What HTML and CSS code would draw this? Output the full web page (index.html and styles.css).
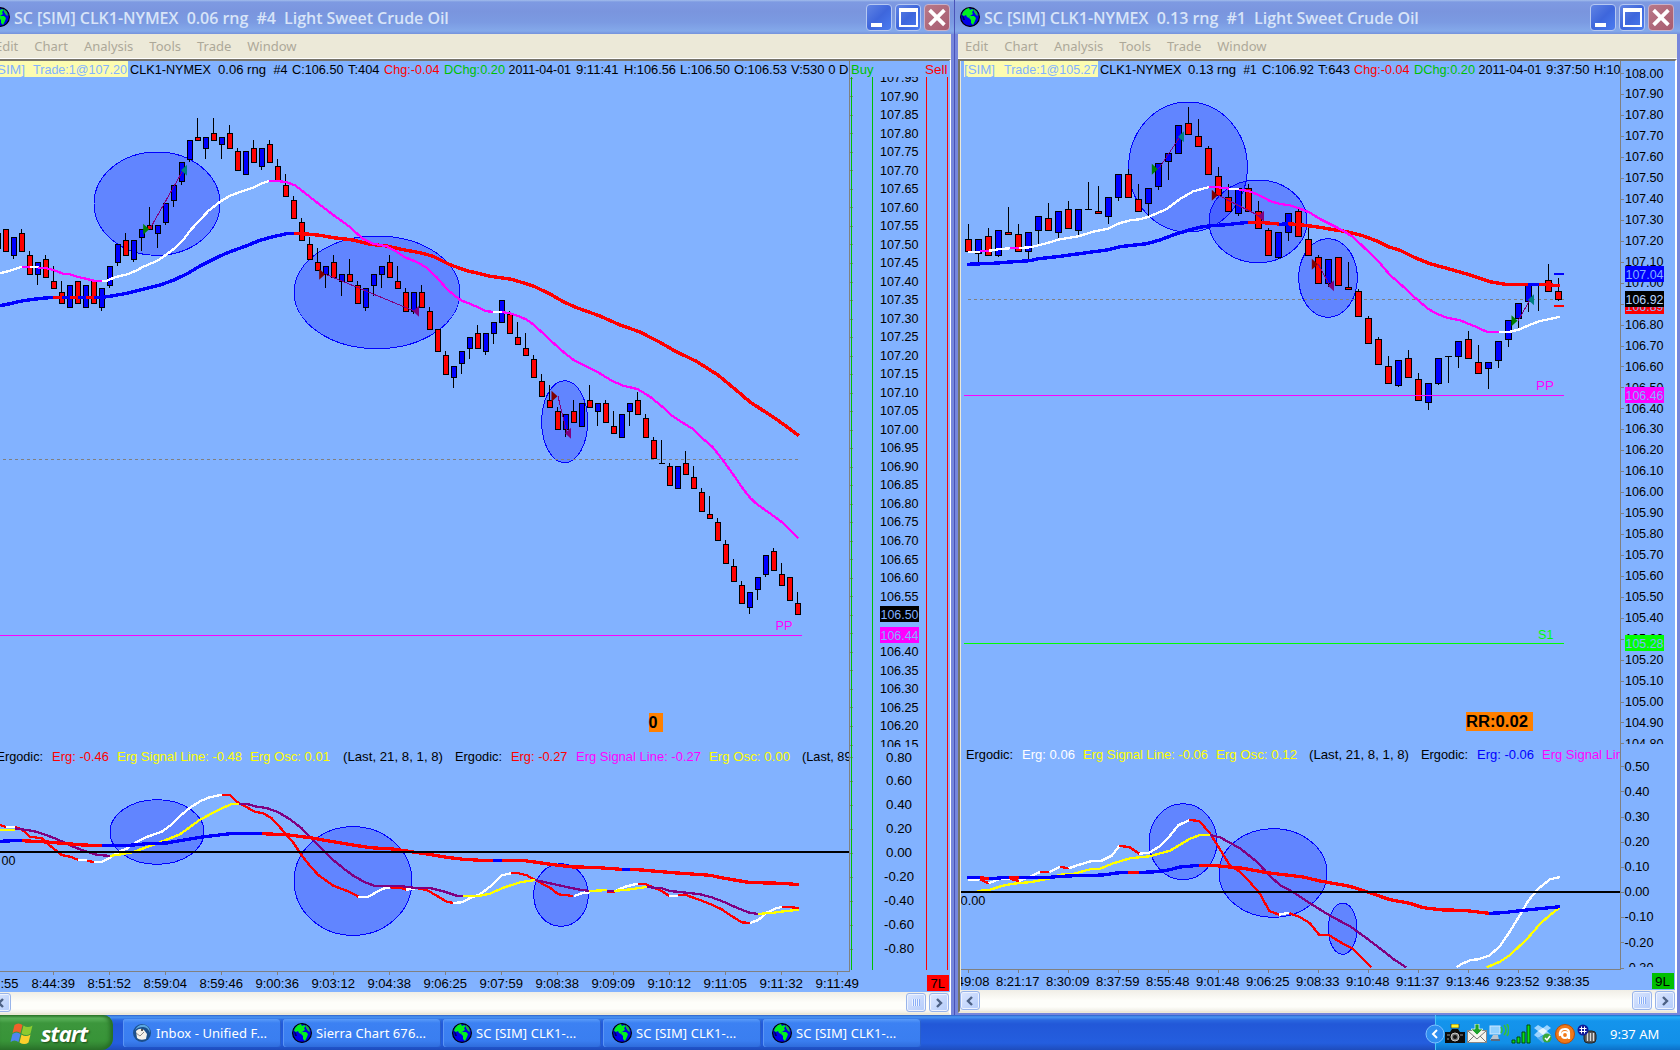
FILE: index.html
```
<!DOCTYPE html>
<html lang="en">
<head>
  <meta charset="UTF-8">
  <meta name="viewport" content="width=device-width, initial-scale=1.0">
  <title>Sierra Chart</title>
  <link rel="stylesheet" href="styles.css">
</head>
<body>
  <!-- Shared icons -->
  <svg class="defs" width="0" height="0">
    <symbol id="globe" viewBox="0 0 20 20">
      <circle cx="10" cy="10" r="9.4" fill="#0000e8" stroke="#000" stroke-width="1.2"/>
      <path d="M3 5l3-3 3-1 1 2 2-1 2 1-2 2 1 2-3 2-1 2-2-1-1-2-2 1-2-1z" fill="#00f020"/>
      <path d="M10 9l4 0 2 2-1 3-2 4-2-2 0-3-2-2z" fill="#00f020"/>
      <path d="M14 2l3 3 1 4-2-1-2-3z" fill="#18b838"/>
      <path d="M2 8l2 2 1 3-2 0z" fill="#000060"/>
    </symbol>
    <symbol id="arrow-left" viewBox="0 0 20 20">
      <path d="M12 6l-4 4 4 4" fill="none" stroke="#4d6185" stroke-width="2.4"/>
    </symbol>
    <symbol id="arrow-right" viewBox="0 0 20 20">
      <path d="M8 6l4 4-4 4" fill="none" stroke="#4d6185" stroke-width="2.4"/>
    </symbol>
    <symbol id="close" viewBox="0 0 26 26">
      <path d="M5 5l16 16M21 5l-16 16" stroke="#fff" stroke-width="4"/>
    </symbol>
  </svg>

  <div class="desktop">
    <div class="windows">
      <!-- 0.06 range chart -->
      <section class="window window-left">
        <header class="title-bar">
          <svg class="globe"><use href="#globe"/></svg>
          <h1 class="title">SC [SIM] CLK1-NYMEX&nbsp; 0.06 rng&nbsp; #4&nbsp; Light Sweet Crude Oil</h1>
          <div class="caption-buttons">
            <span class="caption minimize"></span>
            <span class="caption maximize"></span>
            <span class="caption close"><svg><use href="#close"/></svg></span>
          </div>
        </header>
        <nav class="menu">
          <span>Edit</span><span>Chart</span><span>Analysis</span><span>Tools</span><span>Trade</span><span>Window</span>
        </nav>
        <div class="client">
          <svg class="chart" id="chartLeft" width="950" height="931" viewBox="0 61 950 931"></svg>
          <div class="scrollbar">
            <span class="scroll-button"><svg><use href="#arrow-left"/></svg></span>
            <span class="thumb"><i></i></span>
            <span class="scroll-button"><svg><use href="#arrow-right"/></svg></span>
          </div>
        </div>
      </section>

      <!-- 0.13 range chart -->
      <section class="window window-right">
        <header class="title-bar">
          <svg class="globe"><use href="#globe"/></svg>
          <h1 class="title">SC [SIM] CLK1-NYMEX&nbsp; 0.13 rng&nbsp; #1&nbsp; Light Sweet Crude Oil</h1>
          <div class="caption-buttons">
            <span class="caption minimize"></span>
            <span class="caption maximize"></span>
            <span class="caption close"><svg><use href="#close"/></svg></span>
          </div>
        </header>
        <nav class="menu">
          <span>Edit</span><span>Chart</span><span>Analysis</span><span>Tools</span><span>Trade</span><span>Window</span>
        </nav>
        <div class="client">
          <svg class="chart" id="chartRight" width="714" height="929" viewBox="961 61 714 929"></svg>
          <div class="scrollbar">
            <span class="scroll-button"><svg><use href="#arrow-left"/></svg></span>
            <span class="thumb"><i></i></span>
            <span class="scroll-button"><svg><use href="#arrow-right"/></svg></span>
          </div>
        </div>
      </section>
    </div>

    <footer class="taskbar">
      <div class="start">
        <svg class="flag" viewBox="0 0 24 24">
          <path d="M4 4q4-3 8 0l-2 8q-4-3-8 0z" fill="#f0602a"/>
          <path d="M13 4.500q4 3 9 0l-2 8q-4 3-9 0z" fill="#8ccb30"/>
          <path d="M2 13q4-3 8 0l-2 8q-4-3-8 0z" fill="#4f86f0"/>
          <path d="M11 13.500q4 3 9 0l-2 8q-4 3-9 0z" fill="#fbd02c"/>
        </svg>
        <span>start</span>
      </div>
      <div class="tasks">
        <div class="task">
          <svg viewBox="0 0 20 20">
            <circle cx="10" cy="10" r="9" fill="#1b4f8c"/>
            <path d="M3 7q3-6 10-5q5 2 5 8q-2-6-7-6q-5 0-8 3z" fill="#5aa6e0"/>
            <path d="M4 8q4-4 8-1l3 4-1 5q-6 2-9-1z" fill="#f4f1ea"/>
            <path d="M4 10l4 3 4-4" fill="none" stroke="#8a8a8a"/>
            <circle cx="10" cy="7" r="1" fill="#222"/>
          </svg>
          <span>Inbox - Unified F...</span>
        </div>
        <div class="task"><svg><use href="#globe"/></svg><span>Sierra Chart 676...</span></div>
        <div class="task"><svg><use href="#globe"/></svg><span>SC [SIM] CLK1-...</span></div>
        <div class="task"><svg><use href="#globe"/></svg><span>SC [SIM] CLK1-...</span></div>
        <div class="task"><svg><use href="#globe"/></svg><span>SC [SIM] CLK1-...</span></div>
      </div>
      <div class="tray">
        <svg class="expand" viewBox="0 0 20 20">
          <circle cx="10" cy="10" r="9" fill="#2f8ef0" stroke="#7cc0ff"/>
          <path d="M12 6l-4 4 4 4" fill="none" stroke="#fff" stroke-width="2"/>
        </svg>
        <!-- camera -->
        <svg viewBox="0 0 20 20">
          <rect x="6" y="0" width="8" height="4" fill="#fff22a" stroke="#222" stroke-width=".6"/>
          <path d="M0 8h5l2-3h6l2 3h5v11H0z" fill="#0c0c0c"/>
          <circle cx="10" cy="13" r="4" fill="#777" stroke="#ccc"/>
          <circle cx="10" cy="13" r="2" fill="#111"/>
          <path d="M2 11h3M15 11h3M2 15h2" stroke="#999"/>
        </svg>
        <!-- mail -->
        <svg viewBox="0 0 20 20">
          <rect x=".5" y="6.500" width="19" height="12" fill="#f6f6ee" stroke="#888"/>
          <path d="M1 7l9 8 9-8M1 18l6-6M19 18l-6-6" fill="none" stroke="#777"/>
          <path d="M8 0h4v5h4l-6 6-6-6h4z" fill="#1ea32a" stroke="#fff" stroke-width=".7"/>
        </svg>
        <!-- network -->
        <svg viewBox="0 0 20 20">
          <rect x="1" y="2" width="10" height="8" fill="#8fd0ff" stroke="#cfe8ff"/>
          <path d="M4 11h5l1 5H1z" fill="#b8c4d0"/>
          <path d="M2 16h9" stroke="#5a6a80" stroke-width="2"/>
          <path d="M12 3q2 3 0 6M15 1q4 5 0 10M18 0q4 6 0 12" fill="none" stroke="#35c03a" stroke-width="1.6"/>
        </svg>
        <!-- signal -->
        <svg viewBox="0 0 20 20">
          <path d="M1 16h3v3h-3zM6 13h3v6h-3zM11 8h3v11h-3zM16 1h3v18h-3z" fill="#08e018" stroke="#024a08"/>
        </svg>
        <!-- dropbox -->
        <svg viewBox="0 0 20 20">
          <path d="M1 4l4-3 5 3 4-3 4 3-4 3 4 4-4 3-4-3-5 3-4-3 4-4z" fill="#9bd4ff"/>
          <path d="M5 7l5-3 4 3-4 4z" fill="#e8f6ff"/>
          <path d="M4 14l6-2 5 3-5 4z" fill="#5aaeee"/>
          <circle cx="14" cy="14" r="4.500" fill="#3aa83a"/>
          <path d="M12 14l2 2 3-4" fill="none" stroke="#fff" stroke-width="1.5"/>
        </svg>
        <!-- antivirus -->
        <svg viewBox="0 0 20 20">
          <circle cx="10" cy="10" r="9.500" fill="#f07818" stroke="#b84c08"/>
          <circle cx="10" cy="11" r="3" fill="none" stroke="#fff" stroke-width="2.200"/>
          <path d="M5 12q-1-7 5-7q4 0 4 4v6" fill="none" stroke="#fff" stroke-width="2.200"/>
        </svg>
        <!-- recycler -->
        <svg viewBox="0 0 20 20">
          <rect x="7" y="7" width="12" height="12" rx="4" fill="#555" stroke="#222"/>
          <path d="M10.500 9v8M13.500 9v8M16.500 9v8" stroke="#ddd" stroke-width="1.400"/>
          <circle cx="6" cy="6" r="5.500" fill="#101a9a"/>
          <path d="M2.500 4.500h7M2.500 7.500h7M4.500 2.500v7M7.500 2.500v7" stroke="#fff"/>
        </svg>
        <time class="clock">9:37 AM</time>
      </div>
    </footer>
  </div>

  <script src="charts.js"></script>
</body>
</html>
```
FILE: styles.css
```
*,
*::after {
  margin: 0;
  padding: 0;
  box-sizing: border-box;
}

body {
  width: 1680px;
  height: 1050px;
  overflow: hidden;
  background: #7a8ae0;
  font-family: "Noto Sans", sans-serif;
  font-size: 13px;
}

svg {
  display: block;
  flex: none;
}

.defs {
  position: absolute;
}

.desktop {
  display: flex;
  flex-direction: column;
  height: 1050px;
}

.windows {
  display: flex;
  height: 1015px;
}

/* Windows */
.window {
  display: flex;
  flex-direction: column;
  background: #7686dc;
  overflow: hidden;
}

.window-left {
  width: 955px;
  padding-right: 3px;
  border-right: 1px solid #4a52b8;
}

.window-right {
  width: 725px;
  padding: 0 3px;
}

.title-bar {
  display: flex;
  flex: none;
  align-items: flex-start;
  height: 34px;
  padding-top: 4px;
  background: linear-gradient(#a3bdec 0, #7e9ae2 2px, #7a95de 12px, #7b9ae2 22px, #84a9ea 31px, #7592dc 34px);
}

.window-left .title-bar {
  margin: 0 -3px 0 0;
  padding-right: 4px;
}

.window-right .title-bar {
  margin: 0 -3px;
  padding-left: 5px;
  padding-right: 6px;
}

.globe {
  width: 20px;
  height: 20px;
  margin-top: 3px;
}

.window-left .globe {
  margin-left: -10px;
}

.title {
  flex: 1;
  margin-left: 4px;
  font: 600 16px/29px "Open Sans", sans-serif;
  letter-spacing: -0.04px;
  color: #d8e4f8;
  white-space: nowrap;
}

.caption-buttons {
  display: flex;
  gap: 3px;
}

.caption {
  display: flex;
  width: 26px;
  height: 27px;
  border: 1px solid #b5c8f2;
  border-radius: 4px;
  background: linear-gradient(135deg, #6084e4, #3e66dc 50%, #4a7cf0);
}

.minimize::after {
  content: "";
  align-self: flex-end;
  width: 11px;
  height: 4px;
  margin: 0 0 3px 4px;
  background: #fff;
}

.maximize::after {
  content: "";
  flex: none;
  width: 19px;
  height: 19px;
  margin: 3px;
  border: 2px solid #fff;
  border-top-width: 4px;
}

.caption.close {
  border-color: #c8b0c8;
  background: linear-gradient(135deg, #b87888, #a85c70);
}

.close svg {
  width: 24px;
  height: 25px;
}

.menu {
  display: flex;
  flex: none;
  gap: 16px;
  height: 25px;
  padding-left: 7px;
  background: #ece9d8;
  color: #aca899;
  line-height: 24px;
}

.window-left .menu {
  padding-left: 0;
}

.window-left .menu span:first-child {
  margin-left: -5px;
}

/* Sunken area around the chart */
.client {
  background: #ece9d8;
  border-top: 2px solid #77746a;
  border-right: 2px solid #fff;
  border-bottom: 2px solid #ece9d8;
  box-shadow: 0 -1px #fff;
}

.window-right .client {
  padding-left: 1px;
  border-left: 2px solid #77746a;
}

.chart {
  background: #82b2ff;
  font-family: "Liberation Sans", Arial, sans-serif;
  font-size: 13px;
}

.scrollbar {
  display: flex;
  align-items: center;
  gap: 3px;
  height: 21px;
  background: linear-gradient(#f0eee6, #fefefa 50%, #fefefa 80%, #f0eee6);
}

.window-left .scrollbar {
  margin-left: -9px;
}

.window-right .scrollbar {
  margin-left: -1px;
}

.scroll-button,
.thumb {
  display: flex;
  align-items: center;
  justify-content: center;
  width: 20px;
  height: 19px;
  border: 1px solid #98b4ea;
  border-radius: 3px;
  background: linear-gradient(135deg, #dbe6fe, #b4ccfb);
  box-shadow: inset 0 0 0 1px #eef3ff;
}

.thumb {
  margin-left: auto;
}

.scroll-button svg {
  width: 20px;
  height: 20px;
}

.thumb i {
  width: 8px;
  height: 7px;
  background: repeating-linear-gradient(90deg, #eef4fe 0 1px, #8cb0f8 1px 2px);
}

/* Taskbar */
.taskbar {
  display: flex;
  height: 35px;
  background: linear-gradient(#2c5fc8 0, #4a96f2 2px, #2a68e0 5px, #2258d8 9px, #245edf 28px, #1e4cbc 35px);
}

.start {
  display: flex;
  align-items: center;
  width: 113px;
  padding-left: 10px;
  border-radius: 0 10px 12px 0;
  background: linear-gradient(#2c7a2c, #5cb45c 3px, #3c963c 8px, #389438 26px, #2c742c);
  box-shadow: inset -3px 0 4px #256c25;
  color: #fff;
  font: italic bold 22px/34px "Open Sans", sans-serif;
  letter-spacing: -0.9px;
  text-shadow: 1px 1px 2px #1a4a1a;
}

.flag {
  width: 25px;
  height: 24px;
  margin-right: 6px;
}

.tasks {
  display: flex;
  flex: 1;
  gap: 2px;
  padding: 4px 0 3px 10px;
}

.task {
  display: flex;
  align-items: center;
  gap: 4px;
  width: 158px;
  padding-left: 9px;
  border-radius: 3px;
  background: linear-gradient(#5a9bf8, #3c81f3 4px, #3a7ef0 22px, #2f6cdc);
  box-shadow: inset 1px 0 #5c96f4, inset -1px 0 #2a60cc;
  color: #fff;
  white-space: nowrap;
}

.task svg {
  width: 20px;
  height: 20px;
}

.task span {
  letter-spacing: 0.07px;
}

.tray {
  display: flex;
  align-items: center;
  gap: 2px;
  width: 245px;
  padding-top: 3px;
  border-left: 1px solid #48c8f8;
  background: linear-gradient(#1c6cc8 0, #28b0f8 2px, #1494ec 6px, #1290e8 28px, #0c70c8);
}

.tray svg {
  width: 20px;
  height: 20px;
}

.tray .expand {
  margin-left: -11px;
  margin-right: -2px;
}

.clock {
  margin-left: 11px;
  color: #fff;
}
```
FILE: charts.js
```
const NS = "http://www.w3.org/2000/svg";
const BG = "#82b2ff";

// Coordinates in the data below are in thirds of a pixel
const T = 3;

function el(parent, name, attrs) {
  const node = document.createElementNS(NS, name);
  for (const key in attrs) node.setAttribute(key, attrs[key]);
  parent.appendChild(node);
  return node;
}

function rect(svg, x, y, w, h, fill) {
  return el(svg, "rect", { x, y, width: w, height: h, fill });
}

// Text that runs from x1 to x2
function text(svg, x1, x2, y, str, fill = "#000", extra = {}) {
  const node = el(svg, "text", {
    x: x1, y, fill, textLength: x2 - x1, lengthAdjust: "spacingAndGlyphs", ...extra
  });
  node.textContent = str;
}

function clip(svg, id, x, y, w, h) {
  const c = el(svg, "clipPath", { id });
  el(c, "rect", { x, y, width: w, height: h });
  return el(svg, "g", { "clip-path": `url(#${id})` });
}

// Rows: [color, top, bottom, high, low]
function candles(svg, rows, x0, pitch, width) {
  rows.forEach(([color, top, bottom, high, low], i) => {
    const x = x0 + i * pitch;
    const t = Math.floor(top / T);
    const b = Math.floor(bottom / T);
    const h = high ? Math.floor(high / T) : t;
    const l = low ? Math.floor(low / T) : b;
    const mid = x + Math.floor((width - 1) / 2);
    rect(svg, mid, h, 1, l - h + 1, "#000");
    rect(svg, x, t, width, b - t + 1, "#000");
    if (b > t) rect(svg, x + 1, t + 1, width - 2, b - t - 1, color === "R" ? "#f00" : "#00f");
  });
}

// Segments: [color, "x,y x,y ..."]
function line(svg, segments, width, dx = 0, dy = 0) {
  segments.forEach(([stroke, points]) => {
    const pts = points.split(" ").map(p => {
      const [x, y] = p.split(",").map(Number);
      return `${((x + dx) / T).toFixed(1)},${((y + dy) / T).toFixed(1)}`;
    }).join(" ");
    el(svg, "polyline", {
      points: pts, fill: "none", stroke, "stroke-width": width, "shape-rendering": "crispEdges"
    });
  });
}

function ellipses(svg, rows, dx = 0, dy = 0) {
  rows.forEach(([cx, cy, rx, ry]) => {
    el(svg, "ellipse", {
      cx: (cx + dx) / T, cy: (cy + dy) / T, rx: rx / T, ry: ry / T,
      fill: "#00f", "fill-opacity": 0.25, stroke: "#00f", "shape-rendering": "crispEdges"
    });
  });
}

// Trades: [entry color, entry x, entry y, exit color, exit x, exit y]
function trades(svg, rows, dx = 0) {
  rows.forEach(([c1, x1, y1, c2, x2, y2]) => {
    const a = (x1 + dx) / T, b = y1 / T, c = (x2 + dx) / T, d = y2 / T;
    el(svg, "line", { x1: a, y1: b, x2: c, y2: d, stroke: "purple", "shape-rendering": "crispEdges" });
    el(svg, "path", { d: `M${a - 6.5} ${b - 5.5}v11l6 -5.5z`, fill: c1 });
    el(svg, "path", { d: `M${c + 4} ${d - 5.5}v11l-6 -5.5z`, fill: c2 });
  });
}

function tag(svg, x, y, str, fill, color = BG) {
  rect(svg, x, y, 39, 16, fill);
  text(svg, x + 0.5, x + 38.5, y + 12.7, str, color);
}

function dashed(svg, x1, x2, y) {
  el(svg, "line", { x1, x2, y1: y, y2: y, stroke: "#808080", "stroke-dasharray": "3 3", "shape-rendering": "crispEdges" });
}

/* ---------- 0.06 range chart ---------- */

const leftBars = [
  ["R", 700, 745], ["R", 688, 754], ["B", 712, 766, 0, 775], ["R", 700, 754, 688], ["R", 766, 823, 754],
  ["B", 787, 823, 0, 853], ["R", 778, 832, 766], ["R", 844, 865, 799], ["R", 877, 910, 844], ["B", 856, 922],
  ["R", 844, 910], ["B", 856, 922], ["R", 844, 910], ["B", 865, 922, 0, 932], ["B", 799, 856, 0, 862],
  ["B", 733, 787, 0, 796], ["R", 721, 766, 700], ["B", 721, 778, 0, 784], ["B", 688, 712, 0, 752], ["R", 676, 688, 622],
  ["B", 676, 700, 0, 743], ["B", 610, 667, 0, 674], ["B", 556, 601, 0, 620], ["B", 487, 544, 0, 553], ["B", 421, 478, 0, 484],
  ["R", 412, 421, 355], ["B", 412, 445, 0, 475], ["R", 400, 421, 355], ["B", 412, 433, 0, 475], ["R", 400, 445, 376],
  ["R", 454, 511, 445], ["B", 454, 523], ["R", 445, 487, 421], ["B", 445, 499, 0, 508], ["R", 433, 487, 421],
  ["R", 499, 541, 478], ["R", 556, 589, 523], ["R", 601, 655, 590], ["R", 667, 721, 656], ["R", 733, 778, 712],
  ["R", 787, 811, 745], ["B", 799, 823, 0, 862], ["R", 787, 832, 767], ["B", 823, 844, 0, 886], ["R", 823, 844, 778],
  ["R", 856, 910, 845], ["B", 865, 922, 0, 932], ["B", 823, 856, 0, 886], ["B", 799, 823, 0, 862], ["R", 787, 832, 767],
  ["R", 844, 865, 799], ["R", 877, 934, 866], ["B", 877, 934, 0, 940], ["R", 877, 922, 856], ["R", 934, 988, 922],
  ["R", 988, 1054], ["R", 1066, 1123, 1054], ["B", 1099, 1132, 0, 1163], ["B", 1054, 1090, 0, 1121], ["B", 1012, 1045, 0, 1076],
  ["R", 1000, 1045, 976], ["B", 1000, 1054, 0, 1064], ["B", 967, 1000, 0, 1031], ["B", 901, 967], ["R", 943, 1000, 934],
  ["R", 1012, 1033, 967], ["R", 1045, 1066, 1000], ["R", 1078, 1132, 1066], ["R", 1144, 1189, 1123], ["R", 1201, 1222, 1156],
  ["R", 1234, 1288, 1222], ["B", 1243, 1288, 0, 1310], ["R", 1234, 1267, 1200], ["B", 1210, 1279], ["R", 1201, 1222, 1156],
  ["B", 1210, 1234, 0, 1277], ["R", 1210, 1267, 1200], ["R", 1279, 1300, 1234], ["B", 1243, 1312], ["B", 1210, 1234, 0, 1277],
  ["R", 1201, 1243, 1177], ["R", 1255, 1312, 1243], ["R", 1321, 1376, 1312], ["R", 1390, 1390, 1320], ["R", 1399, 1456, 1390],
  ["B", 1399, 1465], ["R", 1390, 1423, 1354], ["R", 1432, 1465, 1399], ["R", 1477, 1534, 1465], ["R", 1543, 1555, 1488],
  ["R", 1567, 1621, 1555], ["R", 1633, 1690, 1621], ["R", 1699, 1744, 1678], ["R", 1756, 1810, 1744], ["B", 1777, 1822, 0, 1841],
  ["B", 1732, 1768, 0, 1799], ["B", 1666, 1723, 0, 1730], ["R", 1654, 1711, 1644], ["R", 1723, 1756, 1689], ["R", 1732, 1801],
  ["R", 1810, 1843, 1776]
];

const leftFast = [
  ["#fff", "0,820 30,812 66,800"],
  ["#f0f", "66,800 90,800"],
  ["#fff", "90,800 116,801"],
  ["#f0f", "114,803 140,805 160,810 190,821 210,823 234,831 258,836 282,842 306,844"],
  ["#fff", "306,844 320,842 345,832 385,822 410,811 430,800 475,781 500,763 525,744 550,720 570,692 600,660 625,633 660,605 690,587 720,576 760,563 785,550 808,543"],
  ["#f0f", "808,543 830,543 858,546 885,556 910,575 950,607 1000,645 1050,681 1070,700 1090,717 1120,731 1160,739 1190,755 1215,772 1250,786 1280,803 1310,832 1340,866 1365,888 1385,902 1410,911 1440,925 1455,933 1480,936"],
  ["#fff", "1480,936 1506,936"],
  ["#f0f", "1506,936 1530,940 1560,950 1580,959 1602,975 1629,1000 1661,1030 1693,1058 1720,1079 1752,1096 1789,1114 1837,1143 1870,1157 1912,1167 1950,1190 1987,1220 2012,1244 2046,1267 2079,1287 2105,1313 2137,1340 2170,1382 2202,1427 2229,1466 2250,1493 2271,1513 2314,1543 2346,1567 2396,1615"]
];

const leftSlow = [
  ["#00f", "0,917 30,911 65,903 100,898 135,894 162,892"],
  ["#f00", "160,892 186,892"],
  ["#00f", "186,892 210,892"],
  ["#f00", "210,892 234,892"],
  ["#00f", "234,892 258,892"],
  ["#f00", "258,892 282,892"],
  ["#00f", "282,892 306,892 330,889 380,880 430,868 480,855 520,841 560,822 600,798 640,778 680,759 740,737 780,721 820,710 860,701 882,700"],
  ["#f00", "882,700 910,701 960,706 1000,713 1060,720 1110,733 1160,738 1210,749 1260,758 1300,769 1350,794 1400,812 1440,821 1470,829 1535,838 1600,858 1650,882 1690,905 1730,923 1800,948 1860,975 1918,995 1982,1028 2025,1053 2089,1084 2154,1125 2207,1169 2250,1206 2293,1234 2330,1258 2396,1307"]
];

// Oscillator lines start 740px down
const leftErg = [
  ["#f00", "0,255 18,261"],
  ["#fff", "18,261 46,261"],
  ["#f00", "45,261 65,268 90,290 125,295 150,317 185,345 210,350 234,359"],
  ["#fff", "234,359 260,360"],
  ["#f00", "260,362 282,366"],
  ["#fff", "282,366 306,366 330,353 360,334 380,326 410,305 440,291 485,275 510,257 540,228 570,203 600,184 625,173 665,164"],
  ["#f00", "665,164 690,164 716,190 740,202 765,215 790,220 815,235 850,273 880,308 905,346 930,378 955,405 1000,437 1050,456 1075,470"],
  ["#fff", "1075,470 1105,470 1130,456 1150,446 1170,442"],
  ["#f00", "1170,442 1200,443 1218,449"],
  ["#fff", "1218,449 1245,446"],
  ["#f00", "1245,443 1280,450 1310,467 1340,485 1360,489"],
  ["#fff", "1360,489 1385,487 1410,474 1440,463 1475,436 1505,406 1533,400"],
  ["#f00", "1533,399 1553,399 1580,406 1610,422 1650,443 1675,463 1720,468"],
  ["#fff", "1722,468 1750,458 1770,457"],
  ["#f00", "1820,455 1845,456"],
  ["#fff", "1845,453 1875,440 1905,433 1915,433"],
  ["#f00", "1915,432 1935,432 1960,442 1985,453 2008,468"],
  ["#fff", "2008,468 2035,467"],
  ["#f00", "2035,464 2060,466 2100,480 2135,494 2165,508 2190,525 2225,547 2250,549"],
  ["#fff", "2250,549 2275,540 2300,518 2325,506 2345,501"],
  ["#f00", "2345,501 2365,501 2397,504"]
];

const leftSignal = [
  ["#ff0", "0,269 45,269"],
  ["purple", "45,265 100,273 130,282 170,297 210,316 245,330 290,344 330,348"],
  ["#ff0", "330,348 365,343 395,337 410,332 450,318 490,303 540,283 600,239 640,218 670,203 695,192 716,191"],
  ["purple", "716,191 745,193 770,200 800,204 835,217 870,238 905,265 930,292 960,320 990,352 1030,385 1060,407 1095,427 1125,438 1200,438 1240,443 1290,444 1330,454 1370,467 1390,467"],
  ["#ff0", "1388,468 1440,467 1470,461 1510,443 1560,427 1605,420"],
  ["purple", "1605,420 1650,430 1700,441 1740,449 1768,453"],
  ["#ff0", "1768,453 1810,451 1822,451"],
  ["purple", "1820,453 1843,453"],
  ["#ff0", "1843,453 1890,448 1940,441"],
  ["purple", "1940,441 1985,445 2010,453 2060,458 2100,463 2135,472 2170,485 2210,503 2245,517 2273,522"],
  ["#ff0", "2273,522 2320,518 2360,513 2397,509"]
];

const leftErgSlow = [
  ["#00f", "0,304 66,301"],
  ["#f00", "65,302 140,306 200,311 250,315 306,317"],
  ["#00f", "306,317 390,316 440,311 500,309 540,302 600,292 640,287 690,281 785,280"],
  ["#f00", "785,281 860,284 930,293 1000,305 1060,315 1110,323 1180,327 1240,336 1280,342 1340,352 1390,358 1440,361 1480,361"],
  ["#00f", "1480,361 1505,361"],
  ["#f00", "1505,361 1565,361 1610,367 1660,374 1720,381 1780,382 1850,387 1865,388"],
  ["#00f", "1865,388 1890,388"],
  ["#f00", "1890,388 1925,390 1970,394 2020,398 2130,406 2180,416 2245,427 2300,429 2350,430 2397,434"]
];

function drawLeft() {
  const svg = document.getElementById("chartLeft");

  ellipses(svg, [[471, 611, 189, 155], [1131, 877, 249, 169], [1694, 1265, 69, 123]]);
  dashed(svg, 3, 799, 459.5);
  candles(svg, leftBars, -5, 8, 6);
  line(svg, leftSlow, 3.4);
  line(svg, leftFast, 2.3);
  trades(svg, [
    ["green", 449, 688, "teal", 549, 511],
    ["maroon", 977, 823, "purple", 1245, 934],
    ["maroon", 1674, 1189, "purple", 1701, 1300]
  ]);
  rect(svg, 0, 635, 802, 1, "#f0f");
  text(svg, 775.5, 792.5, 630, "PP", "#f0f");

  // Oscillator
  ellipses(svg, [[471, 276, 141, 97], [1059, 423, 177, 163], [1683, 465, 82, 94]], 0, 2220);
  line(svg, leftErg, 2.3, 0, 2220);
  line(svg, leftSignal, 2.3, 0, 2220);
  line(svg, leftErgSlow, 3.3, 0, 2220);
  rect(svg, 0, 851, 849, 2, "#000");
  text(svg, 1.5, 15.5, 864.5, "00");

  // Header
  rect(svg, 0, 61, 128, 16, "#fcfcb0");
  text(svg, -7, 25, 74, "[SIM]", BG);
  text(svg, 33, 127, 74, "Trade:1@107.20", BG);
  [
    [130, 211, "CLK1-NYMEX"], [218, 266, "0.06 rng"], [273.5, 287.5, "#4"], [292, 343.5, "C:106.50"],
    [348, 379.5, "T:404"], [384, 439.5, "Chg:-0.04", "#f00"], [444, 505, "DChg:0.20", "#00c000"],
    [508.5, 571, "2011-04-01"], [576, 618.5, "9:11:41"], [624, 676, "H:106.56"], [680, 730, "L:106.50"],
    [734, 787, "O:106.53"], [791, 848.5, "V:530 0 D"], [851, 873.5, "Buy", "#00c000"], [925, 947.5, "Sell", "#f00"]
  ].forEach(([a, b, s, c]) => text(svg, a, b, 74, s, c));

  // Study labels
  const labels = clip(svg, "leftLabels", 0, 740, 849, 40);
  [
    [-3.5, 43, "Ergodic:"], [52, 109, "Erg: -0.46", "#f00"], [117, 242, "Erg Signal Line: -0.48", "#ff0"],
    [250, 330, "Erg Osc: 0.01", "#ff0"], [343, 443, "(Last, 21, 8, 1, 8)"], [455, 502, "Ergodic:"],
    [511, 567.5, "Erg: -0.27", "#f00"], [576, 701, "Erg Signal Line: -0.27", "#f0f"],
    [709, 790, "Erg Osc: 0.00", "#ff0"], [802, 851.5, "(Last, 89"]
  ].forEach(([a, b, s, c]) => text(labels, a, b, 761, s, c));

  rect(svg, 649, 713, 14, 19, "#ff8000");
  text(svg, 648.5, 657.5, 728, "0", "#000", { "font-size": 16, "font-weight": "bold" });

  // Scale
  const scale = clip(svg, "leftScale", 850, 77, 100, 670);
  for (let i = 0; i < 37; i++) {
    const y = 77.8 + i * 18.52;
    rect(svg, 849, Math.round(y), 4, 1, "#808080");
    // 106.45 is covered by a tag
    if (i !== 30) text(scale, 880, 918.5, y + 4.2, (107.95 - i * 0.05).toFixed(2));
  }
  for (let i = 0; i < 9; i++) {
    const y = 757.3 + i * 23.9;
    const v = 0.8 - i * 0.2;
    const s = (Math.abs(v) < 0.01 ? 0 : v).toFixed(2);
    rect(svg, 849, Math.round(y), 4, 1, "#808080");
    text(svg, i > 4 ? 884 : 886, i > 4 ? 914 : 912, y + 4.2, s);
  }
  tag(svg, 880, 606, "106.50", "#000");
  tag(svg, 880, 627, "106.44", "#f0f");
  rect(svg, 849, 61, 1, 911, "#808080");
  rect(svg, 851, 77, 1, 893, "#00c000");
  rect(svg, 872, 77, 1, 893, "#00c000");
  rect(svg, 926, 77, 1, 893, "#f00");
  rect(svg, 947, 77, 1, 893, "#f00");

  // Time axis
  rect(svg, 0, 971, 849, 1, "#808080");
  text(svg, 0.5, 18.5, 988, ":55");
  ["8:44:39", "8:51:52", "8:59:04", "8:59:46", "9:00:36", "9:03:12", "9:04:38", "9:06:25", "9:07:59",
    "9:08:38", "9:09:09", "9:10:12", "9:11:05", "9:11:32", "9:11:49"].forEach((s, i) => {
    rect(svg, 53 + i * 56, 972, 1, 3, "#808080");
    text(svg, 31.5 + i * 56, 75 + i * 56, 988, s);
  });
  rect(svg, 927, 975, 22, 16, "#f00");
  text(svg, 930.5, 945, 988, "7L");
}

/* ---------- 0.13 range chart ---------- */

const rightBars = [
  ["R", 718, 754, 673], ["B", 718, 760, 0, 796], ["R", 709, 766, 685], ["B", 691, 766, 0, 770], ["R", 697, 703, 622],
  ["R", 703, 754, 673], ["B", 697, 754, 0, 778], ["B", 649, 691, 0, 730], ["R", 655, 691, 610], ["B", 634, 697, 0, 718],
  ["R", 628, 685, 604], ["B", 628, 691, 0, 706], ["R", 628, 628, 547], ["R", 634, 640, 559], ["B", 592, 649, 0, 670],
  ["B", 523, 592, 0, 601], ["R", 523, 592, 508], ["R", 598, 634, 553], ["B", 565, 610, 0, 648], ["B", 490, 559, 0, 569],
  ["B", 460, 485, 0, 539], ["B", 376, 460], ["R", 370, 403, 322], ["R", 409, 439, 358], ["R", 445, 523, 438],
  ["R", 529, 586, 502], ["R", 592, 634, 553], ["B", 565, 640, 0, 646], ["R", 565, 634, 553], ["R", 634, 685, 604],
  ["R", 691, 766, 685], ["B", 697, 772, 0, 776], ["B", 640, 697, 0, 722], ["R", 634, 709, 628], ["R", 718, 766, 685],
  ["R", 772, 850, 766], ["B", 778, 850, 0, 860], ["R", 772, 856], ["R", 862, 868, 787], ["R", 874, 949, 868],
  ["R", 955, 1030, 949], ["R", 1018, 1093, 1012], ["R", 1099, 1150, 1069], ["B", 1081, 1156, 0, 1160], ["R", 1075, 1132, 1051],
  ["R", 1138, 1201, 1120], ["B", 1150, 1207, 0, 1229], ["B", 1075, 1150, 0, 1154], ["R", 1069, 1069, 0, 1148], ["B", 1024, 1069, 0, 1103],
  ["R", 1018, 1075, 994], ["R", 1087, 1120, 1036], ["B", 1087, 1105, 0, 1166], ["B", 1024, 1081, 0, 1103], ["B", 961, 1018, 0, 1040],
  ["B", 910, 955, 0, 988], ["B", 856, 904, 0, 935], ["R", 853, 853, 0, 930], ["R", 841, 874, 793], ["R", 874, 898, 835, 902]
];

// Lines of this chart start 950px in
const rightFast = [
  ["#fff", "55,755 90,756"],
  ["#f0f", "90,752 118,752"],
  ["#fff", "118,752 150,747 180,745"],
  ["#f0f", "180,744 206,744"],
  ["#fff", "206,744 240,742 285,731 325,719 385,709 430,695 475,686 510,669 545,660 570,658 600,649 650,627 690,597 730,574 778,561"],
  ["#f0f", "778,561 805,562 838,566"],
  ["#fff", "838,566 868,568"],
  ["#f0f", "868,569 895,573 925,584 960,603 990,612 1020,616 1050,626 1080,638 1110,657 1140,672 1180,692 1210,712 1250,750 1290,790 1320,825 1360,860 1395,893 1435,927 1460,941 1490,953 1530,961 1570,977 1610,995 1646,996"],
  ["#fff", "1646,996 1680,995 1710,988 1740,974 1770,963 1800,957 1830,950"]
];

const rightSlow = [
  ["#00f", "52,793 130,790 180,786 240,782 260,777 330,769 410,758 470,750 510,740 590,731 630,720 670,705 710,692 750,682 780,677 820,675 895,667"],
  ["#f00", "895,667 940,668 988,672"],
  ["#00f", "988,673 1015,672"],
  ["#f00", "1015,671 1050,674 1110,682 1150,689 1190,695 1235,706 1280,723 1315,740 1350,751 1395,773 1440,791 1490,805 1550,822 1620,845 1665,853 1735,854"],
  ["#00f", "1735,853 1768,853"],
  ["#f00", "1768,853 1830,857"]
];

const rightErg = [
  ["#fff", "55,570 90,568"],
  ["#f00", "90,568 116,580"],
  ["#fff", "116,580 150,566 180,566"],
  ["#f00", "180,566 206,573"],
  ["#fff", "206,573 245,558 270,546"],
  ["#f00", "270,546 298,546"],
  ["#fff", "298,546 330,530"],
  ["#f00", "330,530 356,535"],
  ["#fff", "356,535 385,525 425,513 455,512 485,497 508,468"],
  ["#f00", "508,468 538,471 568,491"],
  ["#fff", "568,491 598,488 630,468 660,437 685,406 718,390"],
  ["#f00", "718,390 748,393 780,430 805,470 840,527 870,545 900,577 930,611 958,663 988,674"],
  ["#fff", "988,674 1018,668"],
  ["#f00", "1018,670 1048,680 1080,700 1108,735 1138,736 1170,756 1210,777 1235,803 1263,832"],
  ["#fff", "1520,832 1535,822 1562,810 1585,808 1618,797 1650,768 1680,724 1710,675 1735,632 1765,596 1800,568 1830,561"]
];

const rightSignal = [
  ["#ff0", "80,603 118,600 155,588 190,581 245,576 300,565 330,554 370,552 420,538 450,536 490,520 540,505 598,499 660,482 720,446 750,435 780,435"],
  ["purple", "780,435 810,442 870,475 920,515 960,558 990,585 1030,607 1080,640 1140,677 1200,709 1250,745 1300,783 1330,807 1368,832"],
  ["#ff0", "1610,832 1650,815 1680,795 1730,748 1770,702 1800,675 1830,652"]
];

const rightErgSlow = [
  ["#00f", "52,562 90,562"],
  ["#f00", "90,563 116,566"],
  ["#00f", "116,566 178,562"],
  ["#f00", "178,562 206,563"],
  ["#00f", "206,563 298,562 350,558 460,555 500,549 535,547"],
  ["#f00", "535,547 568,547"],
  ["#00f", "568,547 610,546 660,539 690,531 748,526"],
  ["#f00", "748,526 800,527 880,535 950,548 1060,561 1110,573 1200,589 1250,605 1320,629 1380,640 1420,653 1480,660 1540,661 1618,670"],
  ["#00f", "1618,670 1660,668 1720,661 1800,653 1830,650"]
];

function drawRight() {
  const svg = document.getElementById("chartRight");

  ellipses(svg, [[714, 501, 178, 195], [924, 664, 147, 124], [1134, 834, 88, 118]], 2850);
  dashed(svg, 968, 1564, 299.5);
  candles(svg, rightBars, 965, 10, 7);
  line(svg, rightSlow, 3.4, 2850);
  line(svg, rightFast, 2.3, 2850);
  trades(svg, [
    ["green", 625, 508, "teal", 690, 410],
    ["maroon", 805, 586, "purple", 930, 649],
    ["maroon", 1105, 793, "purple", 1140, 857],
    ["green", 1704, 962, "teal", 1740, 899]
  ], 2850);
  rect(svg, 1554, 273, 10, 2, "#00f");
  rect(svg, 1554, 305, 10, 2, "#f00");
  rect(svg, 964, 395, 600, 1, "#f0f");
  text(svg, 1536, 1554, 390, "PP", "#f0f");
  rect(svg, 964, 643, 600, 1, "#0f0");
  text(svg, 1538, 1553.5, 639, "S1", "#0f0");

  // Oscillator
  ellipses(svg, [[699, 455, 102, 114], [969, 549, 162, 133], [1178, 716, 43, 77]], 2850, 2070);
  line(svg, rightErg, 2.3, 2850, 2070);
  line(svg, rightSignal, 2.3, 2850, 2070);
  line(svg, rightErgSlow, 3.3, 2850, 2070);
  rect(svg, 961, 891, 659, 2, "#000");
  text(svg, 960.5, 985.5, 904.5, "0.00");

  // Header
  rect(svg, 964, 61, 134, 16, "#fcfcb0");
  text(svg, 964, 995, 74, "[SIM]", BG);
  text(svg, 1004, 1097.5, 74, "Trade:1@105.27", BG);
  const header = clip(svg, "rightHeader", 1098, 61, 522, 16);
  [
    [1100, 1181.5, "CLK1-NYMEX"], [1188, 1236, "0.13 rng"], [1243.5, 1256.5, "#1"], [1262, 1314, "C:106.92"],
    [1318, 1350, "T:643"], [1354, 1409.5, "Chg:-0.04", "#f00"], [1414, 1475, "DChg:0.20", "#00c000"],
    [1478.5, 1541.5, "2011-04-01"], [1546, 1589.5, "9:37:50"], [1594, 1620.5, "H:10"]
  ].forEach(([a, b, s, c]) => text(header, a, b, 74, s, c));

  // Study labels
  const labels = clip(svg, "rightLabels", 961, 740, 659, 40);
  [
    [966, 1013, "Ergodic:"], [1022, 1075, "Erg: 0.06", "#fff"], [1083, 1208, "Erg Signal Line: -0.06", "#ff0"],
    [1216, 1297, "Erg Osc: 0.12", "#ff0"], [1309, 1409, "(Last, 21, 8, 1, 8)"], [1421, 1468, "Ergodic:"],
    [1477, 1534, "Erg: -0.06", "#00f"], [1542, 1623, "Erg Signal Lin", "#f0f"]
  ].forEach(([a, b, s, c]) => text(labels, a, b, 759, s, c));

  rect(svg, 1466, 712, 67, 19, "#ff8000");
  text(svg, 1466, 1528, 727, "RR:0.02", "#000", { "font-size": 16, "font-weight": "bold" });

  // Scale
  rect(svg, 1620, 61, 1, 909, "#808080");
  const scale = clip(svg, "rightScale", 1621, 61, 54, 683);
  for (let i = 0; i < 33; i++) {
    const y = 73.3 + i * 20.94;
    rect(svg, 1620, Math.round(y), 4, 1, "#808080");
    // 106.90 is covered by a tag
    if (i !== 11) text(scale, 1625, 1663.5, y + 4.2, (108 - i * 0.1).toFixed(2));
  }
  const osc = clip(svg, "rightOsc", 1621, 744, 54, 223);
  for (let i = 0; i < 9; i++) {
    const y = 766.3 + i * 25.15;
    const v = 0.5 - i * 0.1;
    const s = (Math.abs(v) < 0.01 ? 0 : v).toFixed(2);
    rect(svg, 1620, Math.round(y), 4, 1, "#808080");
    text(osc, 1624.5, i > 5 ? 1653.5 : 1649.5, y + 4.2, s);
  }
  tag(svg, 1625, 298, "106.89", "#f00");
  tag(svg, 1625, 266, "107.04", "#00f");
  tag(svg, 1625, 291, "106.92", "#000", "#b8d4ff");
  tag(svg, 1625, 387, "106.46", "#f0f");
  tag(svg, 1625, 635, "105.28", "#0f0");

  // Time axis
  rect(svg, 961, 969, 660, 1, "#808080");
  ["7:49:08", "8:21:17", "8:30:09", "8:37:59", "8:55:48", "9:01:48", "9:06:25", "9:08:33", "9:10:48",
    "9:11:37", "9:13:46", "9:23:52", "9:38:35"].forEach((s, i) => {
    rect(svg, 968 + i * 50, 970, 1, 3, "#808080");
    text(svg, 946 + i * 50, 989.5 + i * 50, 986, s);
  });
  rect(svg, 1652, 973, 22, 16, "#00c000");
  text(svg, 1655, 1670, 986, "9L");
}

drawLeft();
drawRight();
```
